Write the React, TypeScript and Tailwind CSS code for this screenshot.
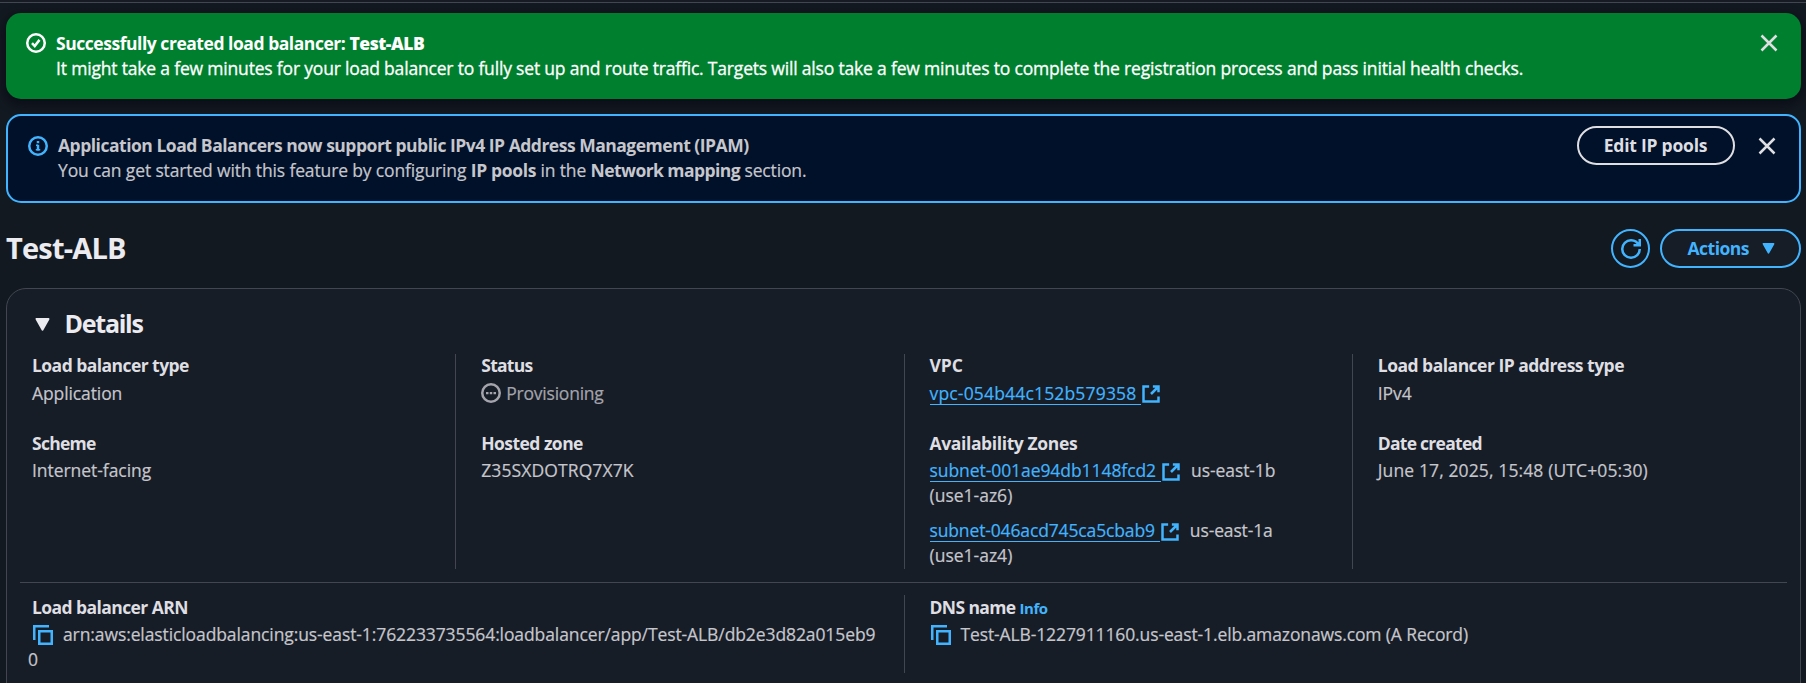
import type { ReactNode } from "react";

const strokeProps = {
  viewBox: "0 0 16 16",
  fill: "none",
  stroke: "currentColor",
  strokeWidth: 2,
} as const;

function CheckIcon() {
  return (
    <svg {...strokeProps} className="size-5 shrink-0">
      <circle cx="8" cy="8" r="7" />
      <path d="m4.8 8.1 2.2 2.3 3.8-4.9" />
    </svg>
  );
}

function InfoIcon() {
  return (
    <svg {...strokeProps} className="size-5 shrink-0">
      <circle cx="8" cy="8" r="7" />
      <path d="M8 11.5V7M8 5.8V4" />
      <path d="M6.4 7.4H8M6.2 11h3.6" strokeWidth="1.1" />
    </svg>
  );
}

function PendingIcon() {
  return (
    <svg {...strokeProps} className="size-5 shrink-0">
      <circle cx="8" cy="8" r="7" />
      <path d="M4 8h2M7 8h2M10 8h2" strokeWidth="1.8" />
    </svg>
  );
}

function CloseIcon() {
  return (
    <svg {...strokeProps} className="size-5 shrink-0">
      <path d="m2 2 12 12M14 2 2 14" />
    </svg>
  );
}

function RefreshIcon() {
  return (
    <svg {...strokeProps} className="size-5 shrink-0">
      <path d="M10 5h5V0M15 8a6.957 6.957 0 0 1-7 7 6.957 6.957 0 0 1-7-7 6.957 6.957 0 0 1 7-7 6.87 6.87 0 0 1 6.3 4" />
    </svg>
  );
}

function ExternalIcon() {
  return (
    <svg {...strokeProps} className="-my-2 inline-block size-5 align-[3.5px]">
      <path d="M14 10v4H2V2h4.5M8 8l6-6M9.5 2H14v4.5" />
    </svg>
  );
}

function CopyIcon() {
  return (
    <svg {...strokeProps} className="-my-2 inline-block size-5 align-[4px] text-[#42b4ff]">
      <path d="M15 5v10H5V5h10Z" />
      <path d="M12.8 1H1v11" />
    </svg>
  );
}

function CaretIcon({ className }: { className: string }) {
  return (
    <svg viewBox="0 0 16 14" fill="currentColor" stroke="currentColor" strokeWidth="2" strokeLinejoin="round" className={className}>
      <path d="M1.5 1h13L8 12.6Z" />
    </svg>
  );
}

function Label({ children, className }: { children: ReactNode; className: string }) {
  return <div className={`h-[25px] font-bold text-[#dedee3] whitespace-nowrap ${className}`}>{children}</div>;
}

function Field({ label, tracking, children }: { label: ReactNode; tracking: string; children: ReactNode }) {
  return (
    <div>
      <Label className={tracking}>{label}</Label>
      <div className="pt-[2.5px] [-webkit-text-stroke:0.2px]">{children}</div>
    </div>
  );
}

function ExternalLink({ children, className }: { children: string; className: string }) {
  return (
    <a className="text-[#42b4ff]">
      <span
        className={`bg-[linear-gradient(#42b4ff,#42b4ff)] bg-[length:100%_1px] bg-[position:0_100%] bg-no-repeat pr-[5px] ${className}`}
      >
        {children}
      </span>
      <ExternalIcon />
    </a>
  );
}

export default function App() {
  return (
    <div className="h-[683px] overflow-hidden bg-[#131920] font-['Open_Sans',sans-serif] text-[17.5px] leading-[25px] text-[#c6c6cd]">
      <div className="h-[3px] border-b border-[#424650] bg-[#161b24]" />

      <div className="flex flex-col pt-[10px] pr-[5px] pl-[6px]">
        <section className="flex h-[86px] items-start rounded-[15px] bg-[#00802f] pt-[18px] pr-[22px] pl-5 text-white shadow-[0_4px_10px_2px_rgba(4,6,18,0.55)]">
          <div className="pt-[2px]">
            <CheckIcon />
          </div>
          <div className="flex-1 pl-[10px] whitespace-nowrap">
            <div className="font-bold tracking-[-0.46px]">
              Successfully created load balancer: <b className="font-extrabold">Test-ALB</b>
            </div>
            <div className="tracking-[-0.182px] [-webkit-text-stroke:0.3px]">
              It might take a few minutes for your load balancer to fully set up and route traffic. Targets will also
              take a few minutes to complete the registration process and pass initial health checks.
            </div>
          </div>
          <button className="pt-[2px] text-[#dedee3]">
            <CloseIcon />
          </button>
        </section>

        <section className="mt-[15px] flex h-[89px] items-start rounded-[15px] border-2 border-[#42b4ff] bg-[#001129] pt-[10px] pr-[22px] pl-5">
          <div className="pt-[10px] text-[#42b4ff]">
            <InfoIcon />
          </div>
          <div className="flex-1 pt-[7px] pl-[10px] whitespace-nowrap">
            <div className="font-bold tracking-[-0.49px]">
              Application Load Balancers now support public IPv4 IP Address Management (IPAM)
            </div>
            <div className="tracking-[-0.14px] [-webkit-text-stroke:0.2px]">
              You can get started with this feature by configuring{" "}
              <b className="font-bold tracking-[-0.35px] [-webkit-text-stroke:0]">IP pools</b> in the{" "}
              <b className="font-bold tracking-[-0.56px] [-webkit-text-stroke:0]">Network mapping</b> section.
            </div>
          </div>
          <button className="flex h-[39px] w-[158px] items-center justify-center rounded-full border-2 border-[#dedee3] pr-px font-bold tracking-[-0.23px] text-[#dedee3]">
            Edit IP pools
          </button>
          <button className="pt-[10px] pl-[22px] text-[#dedee3]">
            <CloseIcon />
          </button>
        </section>

        <header className="mt-[26px] flex h-[39px] items-center">
          <h1 className="flex-1 pb-[3px] text-[29px] leading-[37px] font-bold tracking-[-0.8px] text-[#ebebf0]">Test-ALB</h1>
          <button className="flex size-[39px] items-center justify-center rounded-full border-2 border-[#42b4ff] text-[#42b4ff]">
            <RefreshIcon />
          </button>
          <button className="ml-[10px] flex h-[39px] w-[141px] items-center rounded-full border-2 border-[#42b4ff] bg-[#161d26] pl-[25.5px] font-bold tracking-[-0.5px] text-[#42b4ff]">
            Actions
            <CaretIcon className="ml-[13px] h-[11px] w-[13px]" />
          </button>
        </header>

        <main className="mt-5 h-[420px] rounded-t-[20px] border border-[#424650] bg-[#161d26]">
          <div className="flex h-[64px] items-center pt-[5px] pl-[27.5px] text-[#ebebf0]">
            <CaretIcon className="mt-px h-[13px] w-[15px]" />
            <h2 className="pb-px pl-[15px] text-[25px] leading-[30px] font-bold tracking-[-1.25px]">Details</h2>
          </div>

          <div className="-mt-px grid grid-cols-4 pt-[2px]">
            <div className="-mt-px flex flex-col gap-[25px] pl-[25px]">
              <Field label="Load balancer type" tracking="tracking-[-0.55px]">
                <span className="tracking-[-0.1px]">Application</span>
              </Field>
              <Field label="Scheme" tracking="tracking-[-0.75px]">
                <span className="tracking-[-0.05px]">Internet-facing</span>
              </Field>
            </div>
            <div className="h-[215px] border-l border-[#424650] pl-[25px]">
              <div className="-mt-px flex flex-col gap-[25px]">
                <Field label="Status" tracking="tracking-[-0.75px]">
                  <div className="flex items-center gap-[5px] tracking-[-0.22px] text-[#a4a4ad]">
                    <PendingIcon />
                    Provisioning
                  </div>
                </Field>
                <Field label="Hosted zone" tracking="tracking-[-0.55px]">
                  <span className="tracking-[0.1px]">Z35SXDOTRQ7X7K</span>
                </Field>
              </div>
            </div>
            <div className="h-[215px] border-l border-[#424650] pl-[25px]">
              <div className="-mt-px flex flex-col gap-[25px]">
                <Field label="VPC" tracking="tracking-normal">
                  <ExternalLink className="tracking-[0.17px]">vpc-054b44c152b579358</ExternalLink>
                </Field>
                <Field label="Availability Zones" tracking="tracking-[-0.38px]">
                  <div>
                    <ExternalLink className="tracking-[-0.07px]">subnet-001ae94db1148fcd2</ExternalLink>
                    <span className="pl-[10px] tracking-[-0.08px]">us-east-1b</span>
                    <div className="tracking-[0px]">(use1-az6)</div>
                  </div>
                  <div className="pt-[10px]">
                    <ExternalLink className="tracking-[-0.14px]">subnet-046acd745ca5cbab9</ExternalLink>
                    <span className="pl-[10px] tracking-[-0.14px]">us-east-1a</span>
                    <div className="tracking-[0px]">(use1-az4)</div>
                  </div>
                </Field>
              </div>
            </div>
            <div className="h-[215px] border-l border-[#424650] pl-[25px]">
              <div className="-mt-px flex flex-col gap-[25px]">
                <Field label="Load balancer IP address type" tracking="tracking-[-0.51px]">
                  <span className="tracking-[-0.05px]">IPv4</span>
                </Field>
                <Field label="Date created" tracking="tracking-[-0.73px]">
                  <span className="tracking-[0.12px]">June 17, 2025, 15:48 (UTC+05:30)</span>
                </Field>
              </div>
            </div>
          </div>

          <div className="mx-[13px] mt-[13px] mb-[12px] h-px bg-[#424650]" />

          <div className="grid h-[78px] grid-cols-2">
            <div className="-mt-[0.5px] pl-[25px]">
              <Field label="Load balancer ARN" tracking="tracking-[-0.58px]">
                <div className="-ml-[4px] tracking-[-0.1px]">
                  <span className="pr-[10px] pl-[5px]">
                    <CopyIcon />
                  </span>
                  arn:aws:elasticloadbalancing:us-east-1:762233735564:loadbalancer/app/Test-ALB/db2e3d82a015eb9
                  <br />0
                </div>
              </Field>
            </div>
            <div className="border-l border-[#424650] pl-[25px]">
              <div className="-mt-[0.5px]">
                <Field
                  label={
                    <>
                      DNS name <span className="text-[15px] leading-none tracking-[-0.4px] text-[#42b4ff]">Info</span>
                    </>
                  }
                  tracking="tracking-[-0.62px]"
                >
                  <div className="tracking-[-0.12px]">
                    <span className="pr-[10px] pl-px">
                      <CopyIcon />
                    </span>
                    Test-ALB-1227911160.us-east-1.elb.amazonaws.com (A Record)
                  </div>
                </Field>
              </div>
            </div>
          </div>
        </main>
      </div>
    </div>
  );
}
